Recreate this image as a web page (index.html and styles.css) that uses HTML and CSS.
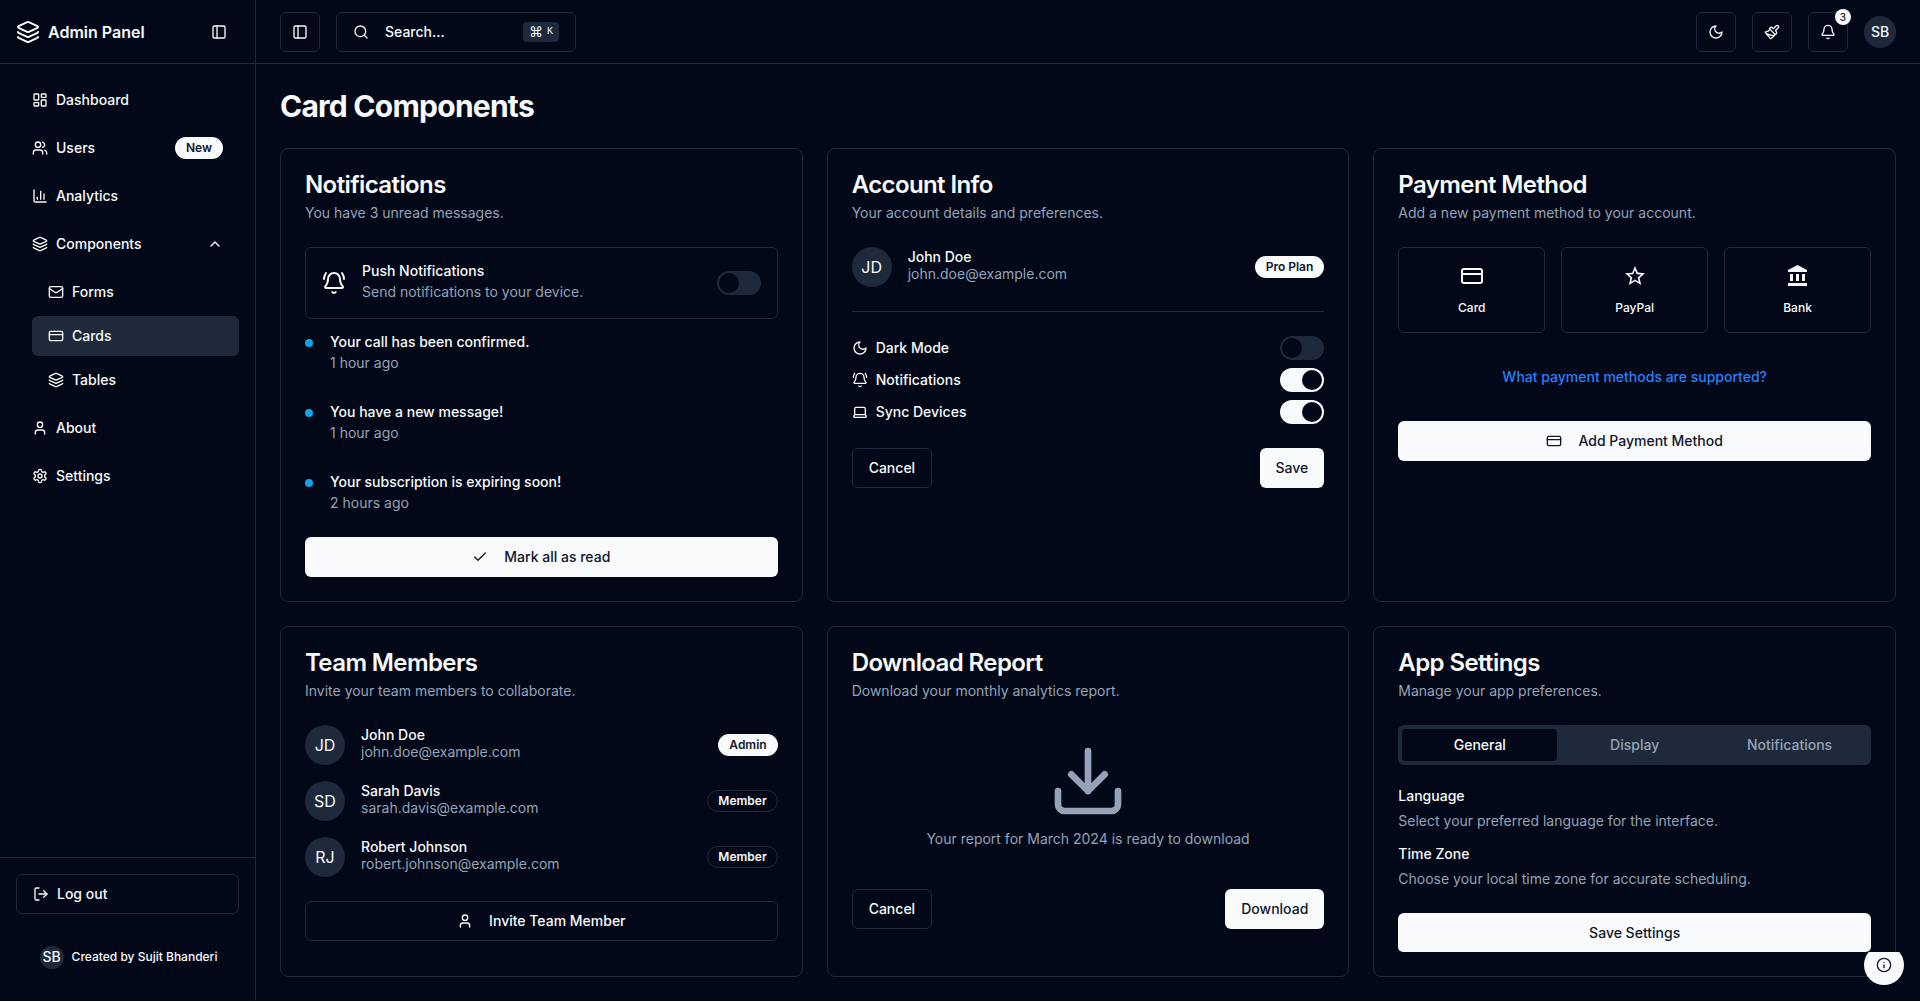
FILE: index.html
```html
<!DOCTYPE html>
<html lang="en">
<head>
<meta charset="utf-8">
<title>Admin Panel</title>
<link rel="stylesheet" href="styles.css">
</head>
<body>
<svg class="sprite" width="0" height="0">
  <symbol id="layers" viewBox="0 0 24 24"><path d="M12.83 2.18a2 2 0 0 0-1.66 0L2.6 6.08a1 1 0 0 0 0 1.83l8.58 3.91a2 2 0 0 0 1.66 0l8.58-3.9a1 1 0 0 0 0-1.83z"/><path d="M2 12a1 1 0 0 0 .58.91l8.6 3.91a2 2 0 0 0 1.65 0l8.58-3.9A1 1 0 0 0 22 12"/><path d="M2 17a1 1 0 0 0 .58.91l8.6 3.91a2 2 0 0 0 1.65 0l8.58-3.9A1 1 0 0 0 22 17"/></symbol>
  <symbol id="panel" viewBox="0 0 24 24"><rect width="18" height="18" x="3" y="3" rx="2"/><path d="M9 3v18"/></symbol>
  <symbol id="search" viewBox="0 0 24 24"><circle cx="11" cy="11" r="8"/><path d="m21 21-4.3-4.3"/></symbol>
  <symbol id="dashboard" viewBox="0 0 24 24"><rect width="7" height="9" x="3" y="3" rx="1"/><rect width="7" height="5" x="14" y="3" rx="1"/><rect width="7" height="9" x="14" y="12" rx="1"/><rect width="7" height="5" x="3" y="16" rx="1"/></symbol>
  <symbol id="users" viewBox="0 0 24 24"><path d="M16 21v-2a4 4 0 0 0-4-4H6a4 4 0 0 0-4 4v2"/><circle cx="9" cy="7" r="4"/><path d="M22 21v-2a4 4 0 0 0-3-3.87"/><path d="M16 3.13a4 4 0 0 1 0 7.75"/></symbol>
  <symbol id="chart" viewBox="0 0 24 24"><path d="M3 3v16a2 2 0 0 0 2 2h16"/><path d="M18 17V9"/><path d="M13 17V5"/><path d="M8 17v-3"/></symbol>
  <symbol id="chevron-up" viewBox="0 0 24 24"><path d="m18 15-6-6-6 6"/></symbol>
  <symbol id="mail" viewBox="0 0 24 24"><rect width="20" height="16" x="2" y="4" rx="2"/><path d="m22 7-8.97 5.7a1.94 1.94 0 0 1-2.06 0L2 7"/></symbol>
  <symbol id="card" viewBox="0 0 24 24"><rect width="20" height="14" x="2" y="5" rx="2"/><path d="M2 10h20"/></symbol>
  <symbol id="user" viewBox="0 0 24 24"><path d="M19 21v-2a4 4 0 0 0-4-4H9a4 4 0 0 0-4 4v2"/><circle cx="12" cy="7" r="4"/></symbol>
  <symbol id="settings" viewBox="0 0 24 24"><path d="M12.22 2h-.44a2 2 0 0 0-2 2v.18a2 2 0 0 1-1 1.73l-.43.25a2 2 0 0 1-2 0l-.15-.08a2 2 0 0 0-2.73.73l-.22.38a2 2 0 0 0 .73 2.73l.15.1a2 2 0 0 1 1 1.72v.51a2 2 0 0 1-1 1.74l-.15.09a2 2 0 0 0-.73 2.73l.22.38a2 2 0 0 0 2.73.73l.15-.08a2 2 0 0 1 2 0l.43.25a2 2 0 0 1 1 1.73V20a2 2 0 0 0 2 2h.44a2 2 0 0 0 2-2v-.18a2 2 0 0 1 1-1.73l.43-.25a2 2 0 0 1 2 0l.15.08a2 2 0 0 0 2.73-.73l.22-.39a2 2 0 0 0-.73-2.73l-.15-.08a2 2 0 0 1-1-1.74v-.5a2 2 0 0 1 1-1.74l.15-.09a2 2 0 0 0 .73-2.73l-.22-.38a2 2 0 0 0-2.73-.73l-.15.08a2 2 0 0 1-2 0l-.43-.25a2 2 0 0 1-1-1.73V4a2 2 0 0 0-2-2z"/><circle cx="12" cy="12" r="3"/></symbol>
  <symbol id="logout" viewBox="0 0 24 24"><path d="M9 21H5a2 2 0 0 1-2-2V5a2 2 0 0 1 2-2h4"/><path d="m16 17 5-5-5-5"/><path d="M21 12H9"/></symbol>
  <symbol id="moon" viewBox="0 0 24 24"><path d="M12 3a6 6 0 0 0 9 9 9 9 0 1 1-9-9Z"/></symbol>
  <symbol id="brush" viewBox="0 0 24 24"><path d="m14.622 17.897-10.68-2.913"/><path d="M18.376 2.622a1 1 0 1 1 3.002 3.002L17.36 9.643a.5.5 0 0 0 0 .707l.944.944a2.41 2.41 0 0 1 0 3.408l-.944.944a.5.5 0 0 1-.707 0L8.354 7.348a.5.5 0 0 1 0-.707l.944-.944a2.41 2.41 0 0 1 3.408 0l.944.944a.5.5 0 0 0 .707 0z"/><path d="M9 8c-1.804 2.71-3.97 3.46-6.583 3.948a.507.507 0 0 0-.302.819l7.32 8.883a1 1 0 0 0 1.185.204C12.735 20.405 16 16.792 16 15"/></symbol>
  <symbol id="bell" viewBox="0 0 24 24"><path d="M10.268 21a2 2 0 0 0 3.464 0"/><path d="M3.262 15.326A1 1 0 0 0 4 17h16a1 1 0 0 0 .74-1.673C19.41 13.956 18 12.499 18 8A6 6 0 0 0 6 8c0 4.499-1.411 5.956-2.738 7.326"/></symbol>
  <symbol id="bell-ring" viewBox="0 0 24 24"><path d="M10.268 21a2 2 0 0 0 3.464 0"/><path d="M22 8c0-2.3-.8-4.3-2-6"/><path d="M3.262 15.326A1 1 0 0 0 4 17h16a1 1 0 0 0 .74-1.673C19.41 13.956 18 12.499 18 8A6 6 0 0 0 6 8c0 4.499-1.411 5.956-2.738 7.326"/><path d="M4 2C2.8 3.7 2 5.7 2 8"/></symbol>
  <symbol id="laptop" viewBox="0 0 24 24"><path d="M20 16V7a2 2 0 0 0-2-2H6a2 2 0 0 0-2 2v9m16 0H4m16 0 1.28 2.55a1 1 0 0 1-.9 1.45H3.62a1 1 0 0 1-.9-1.45L4 16"/></symbol>
  <symbol id="check" viewBox="0 0 24 24"><path d="M20 6 9 17l-5-5"/></symbol>
  <symbol id="download" viewBox="0 0 24 24"><path d="M21 15v4a2 2 0 0 1-2 2H5a2 2 0 0 1-2-2v-4"/><path d="m7 10 5 5 5-5"/><path d="M12 15V3"/></symbol>
  <symbol id="info" viewBox="0 0 24 24"><circle cx="12" cy="12" r="10"/><path d="M12 16v-4"/><path d="M12 8h.01"/></symbol>
  <symbol id="star" viewBox="0 0 24 24"><path d="m22 9.24-7.19-.62L12 2 9.19 8.63 2 9.24l5.46 4.73L5.82 21 12 17.27 18.18 21l-1.63-7.03L22 9.24zM12 15.4l-3.76 2.27 1-4.28-3.32-2.88 4.38-.38L12 6.1l1.71 4.04 4.38.38-3.32 2.88 1 4.28L12 15.4z"/></symbol>
  <symbol id="bank" viewBox="0 0 24 24"><path d="M4 10v7h3v-7H4zm6 0v7h3v-7h-3zM2 22h19v-3H2v3zm14-12v7h3v-7h-3zm-4.5-9L2 6v2h19V6l-9.5-5z"/></symbol>
</svg>

<div class="app">
  <aside class="sidebar">
    <div class="brand">
      <svg class="icon icon-lg"><use href="#layers"/></svg>
      <span class="brand-name">Admin Panel</span>
      <button class="btn btn-icon btn-ghost"><svg class="icon"><use href="#panel"/></svg></button>
    </div>
    <nav class="nav">
      <a class="nav-item"><svg class="icon"><use href="#dashboard"/></svg>Dashboard</a>
      <a class="nav-item"><svg class="icon"><use href="#users"/></svg>Users<span class="badge push">New</span></a>
      <a class="nav-item"><svg class="icon"><use href="#chart"/></svg>Analytics</a>
      <a class="nav-item"><svg class="icon"><use href="#layers"/></svg>Components<svg class="icon push"><use href="#chevron-up"/></svg></a>
      <div class="subnav">
        <a class="nav-item"><svg class="icon"><use href="#mail"/></svg>Forms</a>
        <a class="nav-item active"><svg class="icon"><use href="#card"/></svg>Cards</a>
        <a class="nav-item"><svg class="icon"><use href="#layers"/></svg>Tables</a>
      </div>
      <a class="nav-item"><svg class="icon"><use href="#user"/></svg>About</a>
      <a class="nav-item"><svg class="icon"><use href="#settings"/></svg>Settings</a>
    </nav>
    <div class="sidebar-foot">
      <button class="btn btn-outline btn-logout"><svg class="icon"><use href="#logout"/></svg>Log out</button>
      <div class="credit"><span class="avatar avatar-xs">SB</span><span>Created by Sujit Bhanderi</span></div>
    </div>
  </aside>

  <div class="page">
    <header class="topbar">
      <button class="btn btn-outline btn-icon"><svg class="icon"><use href="#panel"/></svg></button>
      <button class="btn btn-outline search"><svg class="icon"><use href="#search"/></svg>Search...<kbd class="kbd"><span class="kbd-cmd">⌘</span>K</kbd></button>
      <div class="actions">
        <button class="btn btn-outline btn-icon"><svg class="icon"><use href="#moon"/></svg></button>
        <button class="btn btn-outline btn-icon"><svg class="icon"><use href="#brush"/></svg></button>
        <button class="btn btn-outline btn-icon has-count"><svg class="icon"><use href="#bell"/></svg><span class="count">3</span></button>
        <span class="avatar avatar-sm">SB</span>
      </div>
    </header>

    <main class="main">
      <h1 class="title">Card Components</h1>
      <div class="grid">
        <section class="card">
          <div class="card-head"><h2>Notifications</h2><p>You have 3 unread messages.</p></div>
          <div class="push-box">
            <svg class="icon icon-lg"><use href="#bell-ring"/></svg>
            <div class="stack"><b>Push Notifications</b><span>Send notifications to your device.</span></div>
            <span class="switch"></span>
          </div>
          <ul class="feed">
            <li><i class="dot"></i><div class="stack"><b>Your call has been confirmed.</b><span>1 hour ago</span></div></li>
            <li><i class="dot"></i><div class="stack"><b>You have a new message!</b><span>1 hour ago</span></div></li>
            <li><i class="dot"></i><div class="stack"><b>Your subscription is expiring soon!</b><span>2 hours ago</span></div></li>
          </ul>
          <button class="btn btn-primary btn-wide"><svg class="icon"><use href="#check"/></svg>Mark all as read</button>
        </section>

        <section class="card">
          <div class="card-head"><h2>Account Info</h2><p>Your account details and preferences.</p></div>
          <div class="person"><span class="avatar">JD</span><div class="who"><b>John Doe</b><span>john.doe@example.com</span></div><span class="badge push">Pro Plan</span></div>
          <hr class="rule">
          <div class="options">
            <div class="option"><svg class="icon"><use href="#moon"/></svg>Dark Mode<span class="switch"></span></div>
            <div class="option"><svg class="icon"><use href="#bell-ring"/></svg>Notifications<span class="switch on"></span></div>
            <div class="option"><svg class="icon"><use href="#laptop"/></svg>Sync Devices<span class="switch on"></span></div>
          </div>
          <div class="card-foot"><button class="btn btn-outline">Cancel</button><button class="btn btn-primary">Save</button></div>
        </section>

        <section class="card">
          <div class="card-head"><h2>Payment Method</h2><p>Add a new payment method to your account.</p></div>
          <div class="tiles">
            <div class="tile"><svg class="icon icon-lg"><use href="#card"/></svg>Card</div>
            <div class="tile"><svg class="icon icon-lg solid"><use href="#star"/></svg>PayPal</div>
            <div class="tile"><svg class="icon icon-lg solid"><use href="#bank"/></svg>Bank</div>
          </div>
          <a class="link">What payment methods are supported?</a>
          <button class="btn btn-primary btn-wide"><svg class="icon"><use href="#card"/></svg>Add Payment Method</button>
        </section>

        <section class="card">
          <div class="card-head"><h2>Team Members</h2><p>Invite your team members to collaborate.</p></div>
          <div class="people">
            <div class="person"><span class="avatar">JD</span><div class="who"><b>John Doe</b><span>john.doe@example.com</span></div><span class="badge push">Admin</span></div>
            <div class="person"><span class="avatar">SD</span><div class="who"><b>Sarah Davis</b><span>sarah.davis@example.com</span></div><span class="badge badge-outline push">Member</span></div>
            <div class="person"><span class="avatar">RJ</span><div class="who"><b>Robert Johnson</b><span>robert.johnson@example.com</span></div><span class="badge badge-outline push">Member</span></div>
          </div>
          <button class="btn btn-outline btn-wide"><svg class="icon"><use href="#user"/></svg>Invite Team Member</button>
        </section>

        <section class="card">
          <div class="card-head"><h2>Download Report</h2><p>Download your monthly analytics report.</p></div>
          <div class="report"><svg class="icon icon-xl"><use href="#download"/></svg><p>Your report for March 2024 is ready to download</p></div>
          <div class="card-foot"><button class="btn btn-outline">Cancel</button><button class="btn btn-primary">Download</button></div>
        </section>

        <section class="card">
          <div class="card-head"><h2>App Settings</h2><p>Manage your app preferences.</p></div>
          <div class="tabs"><span class="tab active">General</span><span class="tab">Display</span><span class="tab">Notifications</span></div>
          <dl class="prefs">
            <div><dt>Language</dt><dd>Select your preferred language for the interface.</dd></div>
            <div><dt>Time Zone</dt><dd>Choose your local time zone for accurate scheduling.</dd></div>
          </dl>
          <button class="btn btn-primary btn-wide btn-save">Save Settings</button>
        </section>
      </div>
    </main>
  </div>
</div>
<button class="fab"><svg class="icon"><use href="#info"/></svg></button>
</body>
</html>
```
FILE: styles.css
```css
:root {
  --bg: #020817;
  --fg: #f8fafc;
  --line: #1e293b;
  --muted: #94a3b8;
  --ink: #0f172a;
}
* { box-sizing: border-box; margin: 0; padding: 0; }
html { background: #fff; overflow: hidden; }
body { font: 14px/20px Inter, "Liberation Sans", sans-serif; color: var(--fg); }
button { font: inherit; color: inherit; }
b { font-weight: 500; }
ul { list-style: none; }
.sprite { position: absolute; }

.icon { width: 16px; height: 16px; flex: none; fill: none; stroke: currentColor; stroke-width: 2; stroke-linecap: round; stroke-linejoin: round; }
.icon-lg { width: 24px; height: 24px; }
.icon-xl { width: 80px; height: 80px; }
.solid { fill: currentColor; stroke: none; }
.push { margin-left: auto; }

.app { display: flex; height: 1001px; background: var(--bg); }
.page { flex: 1; min-width: 0; }

/* Controls */
.btn { height: 40px; padding: 0 16px; display: inline-flex; align-items: center; justify-content: center; gap: 16px; border: 0; border-radius: 6px; background: none; font-weight: 500; white-space: nowrap; }
.btn-outline { border: 1px solid var(--line); background: var(--bg); }
.btn-primary { background: var(--fg); color: var(--ink); }
.btn-icon { width: 40px; padding: 0; flex: none; }
.btn-wide { width: 100%; margin-top: 24px; }
.btn-save { height: 39px; border-radius: 6px 6px 5px 5px; }
.badge { height: 22px; padding: 0 11px; border-radius: 11px; background: var(--fg); color: var(--ink); font-size: 12px; font-weight: 600; line-height: 22px; }
.badge-outline { background: none; color: var(--fg); border: 1px solid var(--line); padding: 0 10px; line-height: 20px; }
.avatar { width: 40px; height: 40px; flex: none; display: flex; align-items: center; justify-content: center; border-radius: 50%; background: var(--line); font-size: 16px; }
.avatar-sm { width: 32px; height: 32px; font-size: 14px; font-weight: 500; }
.avatar-xs { width: 24px; height: 23px; font-size: 14px; font-weight: 500; }
.switch { width: 44px; height: 24px; flex: none; margin-left: auto; padding: 2px; display: flex; border-radius: 12px; background: var(--line); }
.switch::before { content: ""; width: 20px; height: 20px; border-radius: 50%; background: var(--bg); }
.switch.on { background: var(--fg); justify-content: flex-end; }

/* Sidebar */
.sidebar { width: 256px; flex: none; display: flex; flex-direction: column; border-right: 1px solid var(--line); }
.brand { height: 64px; display: flex; align-items: center; gap: 8px; padding: 0 16px; border-bottom: 1px solid var(--line); }
.brand-name { font-size: 16px; font-weight: 600; margin-right: auto; }
.nav { flex: 1; padding: 16px; display: flex; flex-direction: column; gap: 8px; }
.nav-item { height: 40px; padding: 0 16px; display: flex; align-items: center; gap: 8px; border-radius: 6px; font-weight: 500; }
.nav-item.active { background: var(--line); }
.subnav { margin-left: 16px; display: flex; flex-direction: column; gap: 4px; }
.sidebar-foot { height: 144px; padding: 16px; border-top: 1px solid var(--line); }
.btn-logout { width: 100%; justify-content: flex-start; gap: 8px; }
.credit { height: 24px; margin-top: 31px; display: flex; align-items: center; justify-content: center; gap: 8px; padding-left: 2px; font-size: 12px; font-weight: 500; }

/* Top bar */
.topbar { height: 64px; padding: 0 24px; display: flex; align-items: center; gap: 16px; border-bottom: 1px solid var(--line); }
.search { width: 240px; justify-content: flex-start; }
.kbd { margin-left: auto; height: 20px; width: 36px; display: flex; align-items: center; justify-content: center; gap: 4px; border-radius: 4px; background: var(--line); font: 500 10px/20px "Liberation Mono", monospace; }
.kbd-cmd { font: 400 14px/20px "DejaVu Sans", sans-serif; }
.actions { margin-left: auto; display: flex; align-items: center; gap: 16px; }
.has-count { position: relative; }
.count { position: absolute; top: -4px; right: -4px; width: 16px; height: 16px; border-radius: 50%; background: var(--fg); color: var(--ink); font-size: 10px; line-height: 16px; text-align: center; }

/* Cards */
.main { padding: 24px; }
.title { font-size: 30px; line-height: 36px; font-weight: 700; letter-spacing: -0.025em; margin-bottom: 24px; }
.grid { display: grid; grid-template-columns: repeat(3, 1fr); gap: 24px; }
.card { padding: 24px; border: 1px solid var(--line); border-radius: 8px; background: var(--bg); }
.card-head { margin-bottom: 24px; }
.card-head h2 { font-size: 24px; line-height: 24px; font-weight: 600; letter-spacing: -0.025em; margin-bottom: 6px; }
.card-head p { color: var(--muted); }
.card-foot { display: flex; justify-content: space-between; margin-top: 24px; }

.stack { display: flex; flex-direction: column; gap: 4px; }
.stack b, .who b { line-height: 14px; }
.stack span, .who span { color: var(--muted); }
.push-box { display: flex; align-items: center; gap: 16px; padding: 16px; border: 1px solid var(--line); border-radius: 6px; }
.feed { margin-top: 16px; display: flex; flex-direction: column; gap: 32px; }
.feed li { display: grid; grid-template-columns: 25px 1fr; }
.dot { width: 8px; height: 8px; margin-top: 4px; border-radius: 50%; background: #0ea5e9; }

.people { display: flex; flex-direction: column; gap: 16px; }
.person { display: flex; align-items: center; gap: 16px; }
.who { display: flex; flex-direction: column; }
.rule { border: 0; height: 1px; background: var(--line); margin: 24px 0; }
.options { display: flex; flex-direction: column; gap: 8px; }
.option { display: flex; align-items: center; gap: 8px; font-weight: 500; }

.tiles { display: grid; grid-template-columns: repeat(3, 1fr); gap: 16px; }
.tile { height: 86px; padding: 16px; display: flex; flex-direction: column; align-items: center; gap: 12px; border: 1px solid var(--line); border-radius: 6px; font-size: 12px; line-height: 16px; font-weight: 500; }
.link { display: block; margin-top: 24px; line-height: 40px; text-align: center; font-weight: 500; color: #2b7fff; }

.report { padding: 16px 0; display: flex; flex-direction: column; align-items: center; gap: 8px; color: var(--muted); }

.tabs { height: 40px; padding: 4px; display: grid; grid-template-columns: repeat(3, 1fr); border-radius: 6px; background: var(--line); }
.tab { display: flex; align-items: center; justify-content: center; border-radius: 4px; font-weight: 500; color: var(--muted); }
.tab.active { background: var(--bg); color: var(--fg); }
.prefs { margin-top: 24px; display: flex; flex-direction: column; gap: 16px; }
.prefs dt { line-height: 14px; font-weight: 500; margin-bottom: 8px; }
.prefs dd { color: var(--muted); }

/* Floating info button; its top edge is cut flush with the button below it */
.fab { position: absolute; left: 1864px; top: 945px; width: 40px; height: 40px; display: flex; align-items: center; justify-content: center; border: 0; border-radius: 50%; background: var(--fg); color: var(--ink); clip-path: inset(7px 0 0 0); }
```
